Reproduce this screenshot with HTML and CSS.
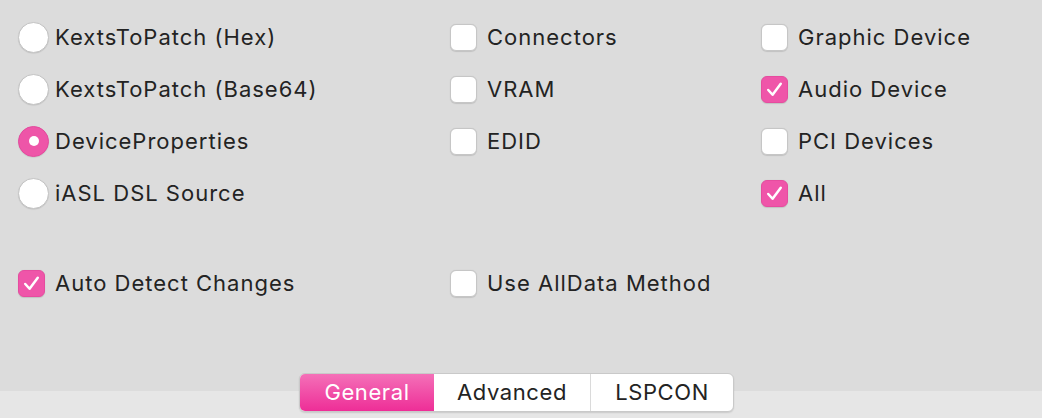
FILE: index.html
```html
<!DOCTYPE html>
<html>
<head>
<meta charset="utf-8">
<link rel="stylesheet" href="styles.css">
</head>
<body>
<div class="window">
  <div class="options">
    <label class="item"><span class="radio"></span><span class="text">KextsToPatch (Hex)</span></label>
    <label class="item"><span class="box"></span><span class="text">Connectors</span></label>
    <label class="item"><span class="box"></span><span class="text">Graphic Device</span></label>

    <label class="item"><span class="radio"></span><span class="text">KextsToPatch (Base64)</span></label>
    <label class="item"><span class="box"></span><span class="text">VRAM</span></label>
    <label class="item"><span class="box on"><svg viewBox="0 0 26 26"><path d="M6.5 13.5 L11 18.5 L19.5 7"/></svg></span><span class="text">Audio Device</span></label>

    <label class="item"><span class="radio on"></span><span class="text">DeviceProperties</span></label>
    <label class="item"><span class="box"></span><span class="text">EDID</span></label>
    <label class="item"><span class="box"></span><span class="text">PCI Devices</span></label>

    <label class="item"><span class="radio"></span><span class="text">iASL DSL Source</span></label>
    <span class="item"></span>
    <label class="item"><span class="box on"><svg viewBox="0 0 26 26"><path d="M6.5 13.5 L11 18.5 L19.5 7"/></svg></span><span class="text">All</span></label>
  </div>
  <div class="options extra">
    <label class="item"><span class="box on"><svg viewBox="0 0 26 26"><path d="M6.5 13.5 L11 18.5 L19.5 7"/></svg></span><span class="text">Auto Detect Changes</span></label>
    <label class="item"><span class="box"></span><span class="text">Use AllData Method</span></label>
  </div>
  <div class="tabs">
    <div class="seg">
      <span class="tab active t1">General</span>
      <span class="tab t2">Advanced</span>
      <span class="tab t3">LSPCON</span>
    </div>
  </div>
</div>
</body>
</html>
```
FILE: styles.css
```css
html, body {
  margin: 0;
  padding: 0;
}
body {
  width: 1042px;
  height: 418px;
  overflow: hidden;
  background: linear-gradient(to bottom, #dcdcdc 0, #dcdcdc 391px, #e6e6e6 391px, #e6e6e6 100%);
  font-family: "Inter", "Liberation Sans", sans-serif;
  font-size: 22px;
  color: #232323;
}
.window {
  display: flex;
  flex-direction: column;
}
.options {
  display: grid;
  grid-template-columns: 433px 311px 1fr;
  grid-auto-rows: 52px;
  padding: 11px 0 0 18px;
}
.options.extra {
  padding-top: 38px;
}
.item {
  display: flex;
  align-items: center;
}
.radio {
  width: 29px;
  height: 29px;
  border-radius: 50%;
  background: #fff;
  border: 1px solid #c4c4c4;
  box-shadow: 0 0.5px 1px rgba(0,0,0,0.12);
  margin-right: 6px;
  flex: none;
  display: flex;
  align-items: center;
  justify-content: center;
}
.radio.on {
  background: #ee55a8;
  border-color: #e54a9e;
}
.radio.on::after {
  content: "";
  width: 10px;
  height: 10px;
  border-radius: 50%;
  background: #fff;
}
.box {
  width: 25px;
  height: 25px;
  border-radius: 6px;
  background: #fff;
  border: 1px solid #c6c6c6;
  box-shadow: 0 0.5px 1px rgba(0,0,0,0.12);
  margin-left: 0;
  margin-right: 10px;
  flex: none;
  display: flex;
}
.options .item:nth-child(3n+2) .box,
.options .item:nth-child(3n) .box {
  margin-left: -1px;
}
.box.on {
  background: #ef55a9;
  border-color: #e64c9f;
}
.box svg {
  width: 25px;
  height: 25px;
}
.box svg path {
  fill: none;
  stroke: #fff;
  stroke-width: 2.6;
  stroke-linecap: round;
  stroke-linejoin: round;
}
.text {
  white-space: nowrap;
  letter-spacing: 1px;
}
.tabs {
  display: flex;
  padding: 64px 0 0 299px;
}
.seg {
  display: flex;
  height: 37px;
  border-radius: 6px;
  background: #fff;
  border: 1px solid #c9c9c9;
  box-shadow: 0 1px 1.5px rgba(0,0,0,0.12);
  overflow: hidden;
}
.tab {
  display: flex;
  align-items: center;
  justify-content: center;
  font-size: 22px;
  letter-spacing: 0.6px;
  color: #232323;
  padding-bottom: 2px;
  box-sizing: border-box;
}
.tab.t1 { width: 134px; }
.tab.t2 { width: 157px; border-right: 1px solid #dadada; }
.tab.t3 { width: 142px; }
.tab.active {
  background: linear-gradient(to bottom, #f470b8, #ee2e97);
  color: #fff;
}
```
